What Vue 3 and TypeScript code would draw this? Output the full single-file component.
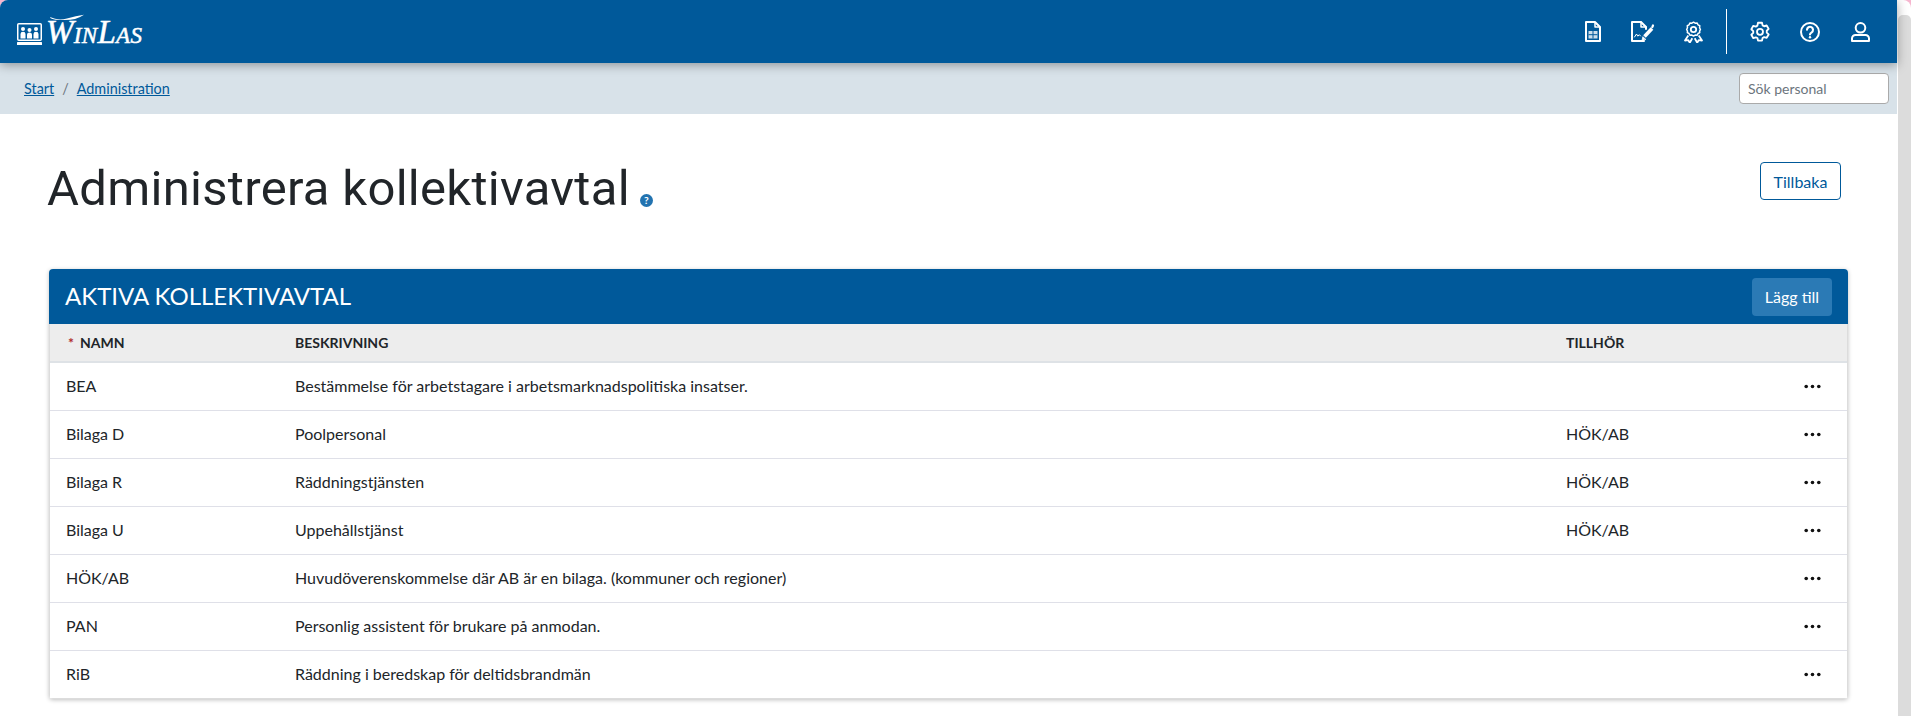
<script setup lang="ts">
interface Row { name: string; desc: string; belongs: string }
const rows: Row[] = [
  { name: 'BEA', desc: 'Bestämmelse för arbetstagare i arbetsmarknadspolitiska insatser.', belongs: '' },
  { name: 'Bilaga D', desc: 'Poolpersonal', belongs: 'HÖK/AB' },
  { name: 'Bilaga R', desc: 'Räddningstjänsten', belongs: 'HÖK/AB' },
  { name: 'Bilaga U', desc: 'Uppehållstjänst', belongs: 'HÖK/AB' },
  { name: 'HÖK/AB', desc: 'Huvudöverenskommelse där AB är en bilaga. (kommuner och regioner)', belongs: '' },
  { name: 'PAN', desc: 'Personlig assistent för brukare på anmodan.', belongs: '' },
  { name: 'RiB', desc: 'Räddning i beredskap för deltidsbrandmän', belongs: '' },
]
</script>

<template>
  <div class="frame">
    <div class="window">
      <div class="page">
        <header class="nav">
          <a class="logo">
            <svg class="logo-mark" width="25" height="22" viewBox="0 0 25 22">
              <rect x="0.75" y="0.75" width="23.5" height="16.5" rx="1" fill="none" stroke="#fff" stroke-width="1.5" />
              <rect x="0" y="19" width="25" height="3" rx="0.5" fill="#fff" />
              <g fill="#fff">
                <circle cx="6" cy="6" r="2" /><path d="M3.500 15.500v-4.500q0-2.300 2.500-2.300t2.500 2.300v4.500z" />
                <circle cx="12.500" cy="7" r="2" /><path d="M10 15.500v-3.800q0-2.100 2.500-2.100t2.500 2.100v3.800z" />
                <circle cx="19" cy="6" r="2" /><path d="M16.500 15.500v-4.500q0-2.300 2.500-2.300t2.500 2.300v4.500z" />
              </g>
            </svg>
            <span class="logo-text"><span class="big">W</span>IN<span class="big">L</span>AS<svg class="swash" width="36" height="7" viewBox="0 0 36 7"><path d="M1 3q8 4 17 1.500T35 .8q-4 2.800-9 4.200T11 6 1 3z" fill="#fff" /></svg></span>
          </a>
          <div class="nav-icons">
            <svg class="i-doc" width="16" height="21" viewBox="0 0 16 21" fill="none" stroke="#fff" stroke-width="2" stroke-linejoin="round">
              <path d="M1 1h9l5 5v14H1z" /><path d="M10 1v5h5" stroke-width="1.500" />
              <path d="M3.500 10h9v7.500h-9z" fill="#fff" fill-opacity=".8" stroke="none" /><path d="M8 10v7.500M3.500 13.700h9" stroke="#00599a" stroke-width="1" />
            </svg>
            <svg class="i-sign" width="24" height="21" viewBox="0 0 24 21" fill="none" stroke="#fff" stroke-width="2" stroke-linejoin="round" stroke-linecap="round">
              <path d="M13 20H1V1h9l5 5v2" /><path d="M10 1v5h5" stroke-width="1.500" />
              <path d="M3.500 16l2-3 1.300 2.200 1.500-1.500 1.200 1.300" stroke-width="1" />
              <path d="M13.500 15.500l7.500-8" stroke-width="3.600" stroke-linecap="butt" />
              <path d="M22 4.500l-.7 1.700" stroke-width="2.200" />
              <path d="M11 19.500l.8-3.800 2.800 2.500z" fill="#fff" stroke-width=".8" />
            </svg>
            <svg class="i-award" width="19" height="22" viewBox="0 0 19 22" fill="none" stroke="#fff" stroke-width="1.800" stroke-linejoin="round">
              <path d="M9.500 1l2 1.200 2.400-.2 1 2.100 2.100 1.100-.2 2.400 1 2.100-1 2.100.2 1.700-2.100 1.100-1 2.100-2.400-.2-2 1.200-2-1.200-2.400.2-1-2.100L2 13.500l.2-1.700-1-2.100 1-2.100L2 5.200l2.100-1.100 1-2.100 2.400.2z" transform="translate(1.650 0.400) scale(.83)" />
              <circle cx="9.500" cy="8.500" r="2.700" />
              <path d="M4.300 14.500L1 19.500l3.300-.3 1.500 2.500 2.500-4.500M14.700 14.500L18 19.500l-3.300-.3-1.500 2.500-2.500-4.500" />
            </svg>
            <span class="divider"></span>
            <svg class="i-gear" width="20" height="21" viewBox="0 0 24 24" fill="none" stroke="#fff" stroke-width="2.200" stroke-linejoin="round">
              <path d="M9.600 1.500h4.800l.7 3.100 1.900 1.100 3-.9 2.400 4.100-2.300 2.200v2.200l2.300 2.200-2.400 4.100-3-.9-1.900 1.100-.7 3.100H9.600l-.7-3.100L7 19.100l-3 .9-2.400-4.100 2.300-2.200v-2.200L1.600 9.300 4 5.200l3 .9 1.900-1.100z" />
              <circle cx="12" cy="12.400" r="3.600" />
            </svg>
            <svg class="i-help" width="20" height="20" viewBox="0 0 20 20" fill="none" stroke="#fff" stroke-width="2" stroke-linecap="round">
              <circle cx="10" cy="10" r="9" />
              <path d="M7 7.800a3 3 0 1 1 4.700 2.500c-1.100.7-1.700 1.200-1.700 2.200" stroke-width="2.100" />
              <circle cx="10" cy="15.300" r="1.200" fill="#fff" stroke="none" />
            </svg>
            <svg class="i-user" width="19" height="20" viewBox="0 0 19 20" fill="none" stroke="#fff" stroke-width="2" stroke-linejoin="round">
              <circle cx="9.500" cy="5.800" r="4.800" />
              <path d="M1 19v-2.500A3.500 3.500 0 0 1 4.500 13h10a3.500 3.500 0 0 1 3.500 3.500V19z" />
            </svg>
          </div>
        </header>

        <div class="crumbs">
          <nav class="crumb-links">
            <a>Start</a><span class="sep">/</span><a>Administration</a>
          </nav>
          <input class="search" type="text" placeholder="Sök personal" />
        </div>

        <main class="content">
          <div class="title-row">
            <h1>Administrera kollektivavtal<svg class="help" width="13" height="13" viewBox="0 0 14 14"><circle cx="7" cy="7" r="7" fill="#2273b0" /><text x="7" y="11" text-anchor="middle" class="help-q">?</text></svg></h1>
            <button class="back">Tillbaka</button>
          </div>

          <section class="card">
            <div class="card-head">
              <h2>AKTIVA KOLLEKTIVAVTAL</h2>
              <button class="add">Lägg till</button>
            </div>
            <div class="table">
              <div class="row head">
                <div class="c-name"><span class="req">*</span>NAMN</div>
                <div class="c-desc">BESKRIVNING</div>
                <div class="c-bel">TILLHÖR</div>
                <div class="c-act"></div>
              </div>
              <div v-for="r in rows" :key="r.name" class="row">
                <div class="c-name">{{ r.name }}</div>
                <div class="c-desc">{{ r.desc }}</div>
                <div class="c-bel">{{ r.belongs }}</div>
                <div class="c-act">
                  <svg width="17" height="5" viewBox="0 0 17 5" fill="#111"><circle cx="2.200" cy="2.500" r="1.800" /><circle cx="8.500" cy="2.500" r="1.800" /><circle cx="14.800" cy="2.500" r="1.800" /></svg>
                </div>
              </div>
            </div>
          </section>
        </main>
      </div>
      <div class="scrollbar"></div>
    </div>
  </div>
</template>

<style>
html, body { margin: 0; padding: 0; background: #fff; overflow: hidden; }
</style>

<style scoped>
.frame { width: 1911px; height: 716px; background: #f6b6cf; }
.window { display: flex; height: 716px; overflow: hidden; background: #fff; border-radius: 8px 8px 0 0; font-family: Lato, sans-serif; color: #212529; }
.page { width: 1897px; flex: none; }
.scrollbar { width: 13px; flex: none; margin: 15px 0 0 1px; background: #dcdcdc; border-radius: 5px 5px 0 0; }
.nav { height: 63px; background: #00599a; display: flex; align-items: center; justify-content: space-between; padding: 0 27px 0 17px; box-shadow: 0 2px 10px rgba(0, 0, 0, .35); position: relative; }
.logo { display: flex; align-items: center; gap: 4px; color: #fff; margin-top: 4px; }
.logo-text { position: relative; font-family: "Liberation Serif", serif; font-style: italic; font-size: 23px; line-height: 30px; letter-spacing: .3px; -webkit-text-stroke: .5px #fff; }
.logo-text .big { font-size: 33px; }
.swash { position: absolute; left: 3px; top: -3px; }
.nav-icons { display: flex; align-items: center; }
.nav-icons svg { flex: none; }
.i-doc { margin-right: 30px; }
.i-sign { margin-right: 29px; }
.i-award { margin-right: 23px; }
.divider { width: 1px; height: 45px; background: #fff; margin-right: 23px; }
.i-gear { margin-right: 30px; }
.i-help { margin-right: 31px; }
.crumbs { height: 51px; background: #d8e2e9; display: flex; align-items: center; justify-content: space-between; padding: 0 8px 0 24px; }
.crumb-links { font-size: 14.400px; display: flex; color: #00599a; }
.crumb-links a { text-decoration: underline; }
.sep { color: #6c757d; margin: 0 8px; }
.search { width: 150px; height: 31px; box-sizing: border-box; border: 1px solid #aaa; border-radius: 4px; background: #fff; padding: 0 8px; font: 14px Lato, sans-serif; outline: none; }
.search::placeholder { color: #6c757d; opacity: 1; }
.content { padding: 0 49px; }
.title-row { height: 155px; display: flex; justify-content: space-between; align-items: flex-start; }
h1 { margin: 39px 0 0 -2px; font: 400 49px/72px Roboto, sans-serif; color: #212529; letter-spacing: .3px; display: flex; align-items: baseline; }
.help { margin-left: 10px; transform: translateY(2px); }
.help-q { font: 700 11px Lato, sans-serif; fill: #fff; }
.back { margin-top: 48px; margin-right: 7px; width: 81px; height: 38px; border: 1px solid #00599a; border-radius: 4px; background: #fff; color: #00599a; font: 16px Lato, sans-serif; padding: 0; }
.card { width: 1799px; border-radius: 4px; box-shadow: 0 1px 4px rgba(0, 0, 0, .25); background: #fff; overflow: hidden; }
.card-head { height: 55px; background: #00599a; display: flex; justify-content: space-between; align-items: center; padding: 0 16px; }
h2 { margin: 0; font: 400 24px/1.200 Lato, sans-serif; color: #fff; }
.add { width: 80px; height: 38px; border: 0; border-radius: 4px; background: #2b7ab5; color: #fff; font: 16px Lato, sans-serif; padding: 0; }
.table { border: 1px solid #dcdcdc; border-top: 0; }
.row { box-sizing: border-box; height: 48px; border-top: 1px solid #dfe0e8; display: flex; align-items: center; font-size: 16px; padding: 0 0 2px 16px; }
.row.head { height: 39px; border-top: 0; border-bottom: 2px solid #dee2e6; background: #ededed; font-size: 14px; font-weight: 700; padding-bottom: 0; }
.row.head + .row { border-top: 0; height: 47px; }
.c-name { width: 229px; flex: none; }
.c-desc { flex: 1; }
.c-bel { width: 238px; flex: none; }
.c-act { width: 43px; flex: none; display: flex; margin-top: 2px; }
.req { color: #b02a2a; margin: 0 6px 0 2px; }
</style>
